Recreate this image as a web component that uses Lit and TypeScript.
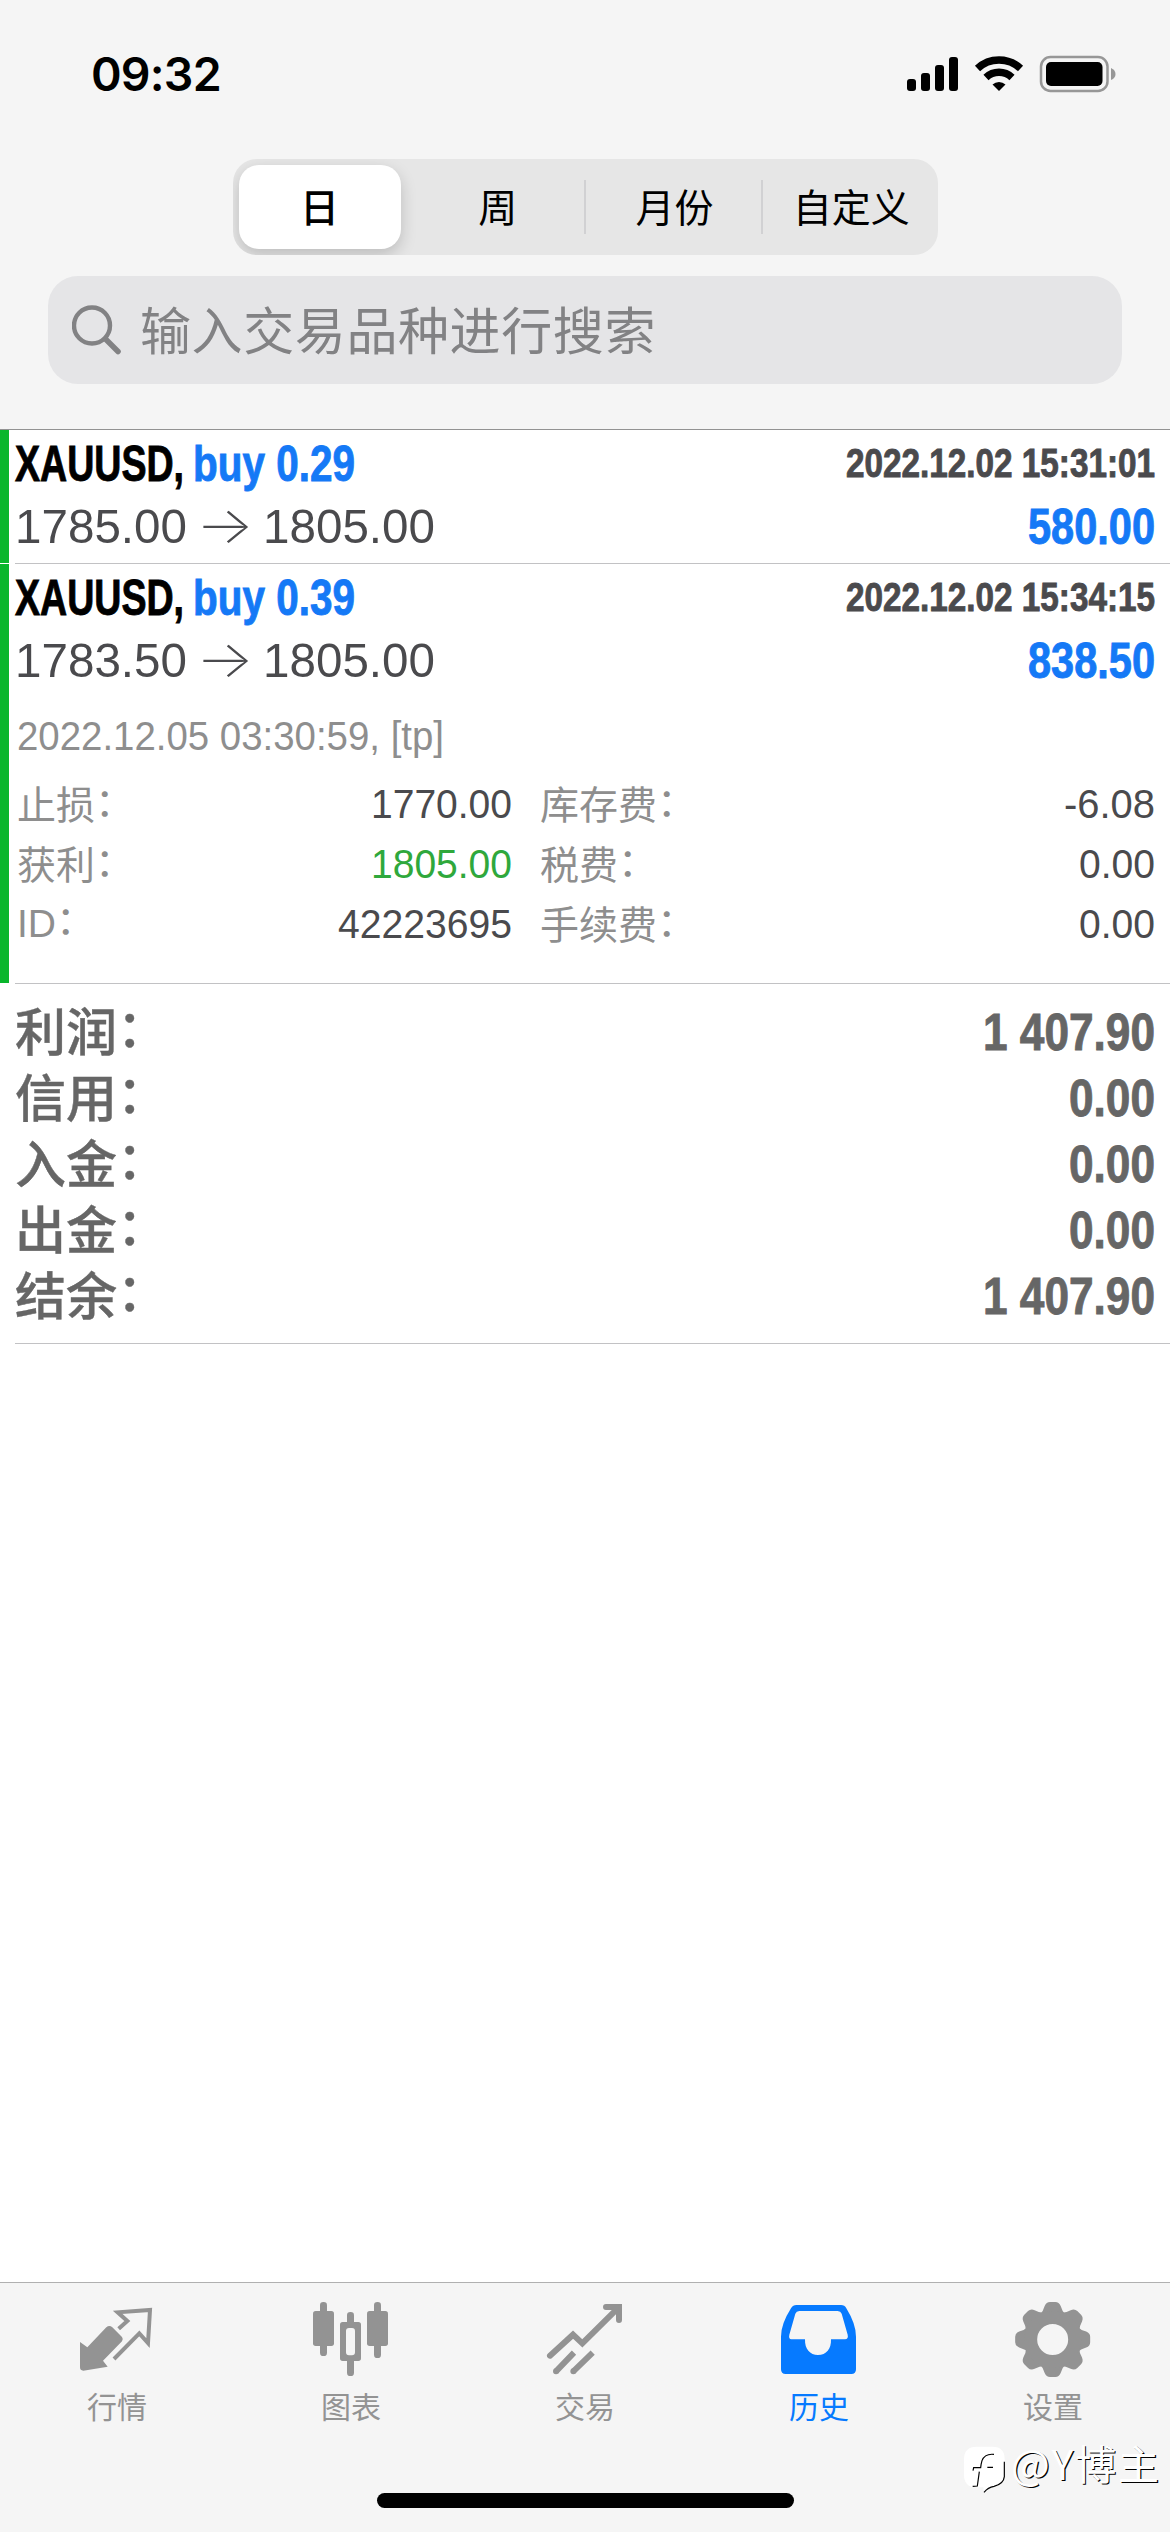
import { LitElement, html, css, svg, nothing } from "lit";
import { customElement, property, state } from "lit/decorators.js";
import { styleMap } from "lit/directives/style-map.js";

/** Single-line Latin text condensed or widened to a fixed advance width. */
@customElement("fit-text")
class FitText extends LitElement {
  @property() text = "";
  @property({ type: Number }) width = 100;
  @property({ type: Number }) size = 49;
  @property({ type: Boolean }) bold = false;
  @state() private ratio = 1;

  static styles = css`
    :host { display: block; }
    .box { overflow: visible; }
    .run {
      display: inline-block;
      font-family: "Liberation Sans", Arial, sans-serif;
      white-space: pre;
      vertical-align: top;
      transform-origin: 0 0;
    }
    .bold { font-weight: 700; -webkit-text-stroke: 0.9px currentColor; }
  `;

  updated() {
    const run = this.renderRoot.querySelector<HTMLElement>(".run")!;
    const natural = run.getBoundingClientRect().width / this.ratio;
    const next = this.width / natural;
    if (Math.abs(next - this.ratio) > 0.001) this.ratio = next;
  }

  render() {
    return html`<div class="box" style=${styleMap({ width: `${this.width}px`, height: `${this.size}px` })}>
      <span class="run ${this.bold ? "bold" : ""}" style=${styleMap({
        fontSize: `${this.size}px`,
        lineHeight: `${this.size}px`,
        transform: `scaleX(${this.ratio})`,
      })}>${this.text}</span>
    </div>`;
  }
}

interface Deal {
  lot: string;
  open: string;
  time: string;
  profit: string;
  detail?: boolean;
}

const DEALS: Deal[] = [
  { lot: "buy 0.29", open: "1785.00", time: "2022.12.02 15:31:01", profit: "580.00" },
  { lot: "buy 0.39", open: "1783.50", time: "2022.12.02 15:34:15", profit: "838.50", detail: true },
];

const SUMMARY: [string, string, number][] = [
  ["利润", "1 407.90", 172],
  ["信用", "0.00", 86],
  ["入金", "0.00", 86],
  ["出金", "0.00", 86],
  ["结余", "1 407.90", 172],
];

const TEETH = [0, 45, 90, 135, 180, 225, 270, 315];

const ICONS = {
  quotes: svg`<svg class="icon" viewBox="231 90 240 240">
    <path d="M240 216 L262 232 L319 172 Q328 164 337 172 L366 201 Q371 208 366 214 L309 272 L323 290 L250 302 Q240 302 240 292Z" fill="currentColor"/>
    <path d="M356 176 L382 153 L353 127 L450 120 L444 219 L418 190 L342 267" fill="none" stroke="currentColor" stroke-width="12"/>
  </svg>`,
  charts: svg`<svg class="icon" viewBox="933 90 240 240" fill="currentColor">
    <rect x="960" y="96" width="21" height="162" rx="10"/><rect x="939" y="123" width="63" height="105" rx="8"/>
    <rect x="1122" y="96" width="21" height="168" rx="10"/><rect x="1101" y="123" width="63" height="105" rx="8"/>
    <rect x="1041" y="126" width="21" height="40" rx="10"/><rect x="1041" y="262" width="21" height="56" rx="10"/>
    <path fill-rule="evenodd" d="M1028 156h47q8 0 8 8v101q0 8-8 8h-47q-8 0-8-8V164q0-8 8-8ZM1047 174q-9 0-9 9v64q0 9 9 9h9q9 0 9-9v-64q0-9-9-9Z"/>
  </svg>`,
  trade: svg`<svg class="icon" viewBox="435 90 240 240" fill="none" stroke="currentColor" stroke-width="18" stroke-linecap="round">
    <path d="M450 257 L519 194 L547 220 L656 112"/>
    <path d="M468 304 L522 248 M520 304 L578 248" stroke-linecap="butt"/>
    <path d="M468 304 h.1 M520 304 h.1"/>
    <path d="M618 111 H657 V150"/>
    <path d="M627 108 H660 V141Z" fill="currentColor" stroke="none"/>
    <path d="M650 102h13q3 0 3 3v10z" fill="currentColor" stroke="none"/>
  </svg>`,
  history: svg`<svg class="icon" viewBox="87 90 240 240">
    <path fill="currentColor" fill-rule="evenodd" d="M139 105 H273 Q284 105 289 115 Q318 162 318 200 V298 Q318 312 304 312 H107 Q93 312 93 298 V200 Q93 162 123 115 Q129 105 139 105Z M148 123 Q139 123 136 131 L118 194 Q115 207 124 208 H165 C164 238 180 255 204 255 C229 255 244 238 243 208 H285 Q296 207 293 194 L275 131 Q272 123 263 123Z"/>
  </svg>`,
  settings: svg`<svg class="icon" viewBox="789 90 240 240">
    <g fill="currentColor">
      ${TEETH.map((a) => svg`<path transform="rotate(${a} 908 208.500)" d="M868 136 Q880 124 884 108 Q889 96 900 96 H916 Q927 96 932 108 Q936 124 948 136Z"/>`)}
    </g>
    <circle cx="908" cy="208.500" r="66" fill="none" stroke="currentColor" stroke-width="39"/>
  </svg>`,
};

const TABS: [string, keyof typeof ICONS][] = [
  ["行情", "quotes"],
  ["图表", "charts"],
  ["交易", "trade"],
  ["历史", "history"],
  ["设置", "settings"],
];

@customElement("app-root")
class AppRoot extends LitElement {
  static styles = css`
    :host {
      display: flex;
      flex-direction: column;
      width: 1170px;
      height: 2532px;
      position: relative;
      background: #fff;
      overflow: hidden;
      font-family: "Liberation Sans", "Noto Sans CJK SC", sans-serif;
      white-space: nowrap;
    }
    * { box-sizing: border-box; }
    .header {
      flex: none;
      height: 430px;
      background: #f5f5f5;
      border-bottom: 1px solid #929292;
      display: flex;
      flex-direction: column;
      align-items: center;
    }
    .status {
      width: 100%;
      height: 159px;
      padding: 55px 54px 0 91px;
      display: flex;
      justify-content: space-between;
      align-items: flex-start;
    }
    .clock {
      font: 600 46.5px/38px Inter, sans-serif;
      letter-spacing: -0.8px;
      color: #000;
    }
    .segments {
      width: 705px;
      height: 96px;
      border-radius: 24px;
      background: #e6e6e6;
      display: flex;
      padding: 6px 0 6px 6px;
      align-items: center;
      font-family: "Noto Sans CJK SC", sans-serif;
      font-size: 39px;
      line-height: 80px;
      color: #000;
      overflow: hidden;
    }
    .segment { flex: 1; height: 84px; text-align: center; padding-left: 2px; }
    .segment.active {
      flex: none;
      width: 162px;
      padding-left: 0;
      margin-right: 9px;
      border-radius: 20px;
      background: #fff;
      font-weight: 500;
      box-shadow: 0 6px 16px rgba(0, 0, 0, 0.18);
    }
    .divider { flex: none; width: 2px; height: 54px; background: #d1d1d3; }
    .search {
      margin-top: 21px;
      width: 1074px;
      height: 108px;
      border-radius: 30px;
      background: #e5e5e7;
      display: flex;
      align-items: center;
      padding-left: 24px;
      gap: 18px;
      color: #828284;
      font-family: "Noto Sans CJK SC", sans-serif;
      font-size: 51px;
      letter-spacing: 0.6px;
      line-height: 76px;
    }
    .search span { padding-bottom: 5px; }
    .deal { display: flex; }
    .stripe { flex: none; width: 9px; height: 133px; background: #09b62c; }
    .detail .stripe { height: 419px; }
    .deal-body {
      flex: 1;
      margin-left: 6px;
      height: 134px;
      padding: 9px 15px 0 0;
      border-bottom: 1px solid #c2c2c4;
    }
    .detail .deal-body { height: 420px; }
    .row { display: flex; justify-content: space-between; height: 63px; }
    .left { display: flex; }
    .symbol { color: #000; }
    .blue { color: #1579f6; }
    .dark { color: #4a4a4d; }
    .lot { margin-left: 9px; }
    .time { padding-top: 4px; }
    .arrow {
      width: 76px;
      text-align: center;
      font: 200 51px/46px Inter, sans-serif;
      transform: scaleX(1.2);
    }
    .closed { color: #8e8e8e; margin: 17px 0 0 2px; }
    .grid {
      display: grid;
      grid-template-columns: 495px 1fr;
      column-gap: 28px;
      grid-auto-rows: 60px;
      margin: 18px 0 0 2px;
    }
    .cell { display: flex; justify-content: space-between; align-items: center; }
    .label {
      color: #8e8e8e;
      font-size: 39px;
      line-height: 56px;
      padding-bottom: 4px;
      font-family: "Noto Sans CJK SC", sans-serif;
    }
    .label.latin {
      font-family: "Liberation Sans", "Noto Sans CJK SC", sans-serif;
      padding-bottom: 0;
    }
    .colon { vertical-align: 0.07em; line-height: 0; }
    .green { color: #2fa83c; }
    .summary {
      margin-left: 15px;
      height: 360px;
      padding: 15px 15px 0 0;
      border-bottom: 1px solid #c2c2c4;
      color: #666;
    }
    .total {
      display: flex;
      justify-content: space-between;
      align-items: center;
      height: 66px;
      font: 500 51px/60px "Noto Sans CJK SC", sans-serif;
    }
    .total-label { padding-bottom: 6px; -webkit-text-stroke: 0.4px currentColor; }
    .spacer { flex: 1; }
    .tabs {
      flex: none;
      height: 250px;
      background: #f5f5f5;
      border-top: 1px solid #b0b0b0;
      display: flex;
      flex-direction: column;
      align-items: center;
    }
    .tab-row { display: flex; width: 100%; height: 210px; padding-top: 17px; }
    .tab {
      flex: 1;
      display: flex;
      flex-direction: column;
      align-items: center;
      gap: 3px;
      color: #939393;
      font: 400 30px/44px "Noto Sans CJK SC", sans-serif;
    }
    .tab.active { color: #067aff; }
    .icon { display: block; width: 80px; height: 80px; }
    .home { width: 417px; height: 15px; border-radius: 8px; background: #000; }
    .mark {
      position: absolute;
      left: 964px;
      top: 2443px;
      height: 52px;
      display: flex;
      align-items: center;
      gap: 5px;
      color: #fff;
      font: 400 41px/38px "Noto Sans CJK SC", sans-serif;
      letter-spacing: 1.8px;
      text-shadow: 1.2px 1.2px 0 #000;
    }
    .mark svg { display: block; }
    .mark span { padding-bottom: 14px; }
  `;

  private status() {
    return html`<div class="status">
      <span class="clock">09:32</span>
      <svg width="209" height="38" viewBox="907 55 209 38">
        <rect x="907" y="79" width="9" height="12" rx="3"/>
        <rect x="921" y="73" width="9" height="18" rx="3"/>
        <rect x="935" y="65" width="9" height="26" rx="3"/>
        <rect x="949" y="57" width="9" height="34" rx="3"/>
        <g fill="none" stroke="#000" stroke-width="7.500">
          <path d="M977.500 68.500 A31.500 31.500 0 0 1 1020.500 68.500"/>
          <path d="M986 77.500 A19 19 0 0 1 1012 77.500"/>
        </g>
        <path d="M999 91 L992.500 84.500 A9.500 9.500 0 0 1 1005.500 84.500Z"/>
        <rect x="1041" y="57" width="66.500" height="34" rx="9.500" fill="none" stroke="#979797" stroke-width="2.500"/>
        <rect x="1046" y="62" width="56.500" height="24" rx="5"/>
        <path d="M1111 68 Q1115.500 70 1115.500 74 Q1115.500 78 1111 80Z" fill="#979797"/>
      </svg>
    </div>`;
  }

  private field(label: string, value: string, width: number, tone = "dark", latin = false) {
    return html`<div class="cell">
      <span class="label ${latin ? "latin" : ""}">${label}<span class="colon">：</span></span>
      <fit-text class=${tone} text=${value} width=${width} size="40"></fit-text>
    </div>`;
  }

  private deal(d: Deal) {
    return html`<div class="deal ${d.detail ? "detail" : ""}">
      <div class="stripe"></div>
      <div class="deal-body">
        <div class="row">
          <div class="left">
            <fit-text class="symbol" bold text="XAUUSD," width="169" size="49.500"></fit-text>
            <fit-text class="blue lot" bold text=${d.lot} width="162" size="49.500"></fit-text>
          </div>
          <fit-text class="dark time" bold text=${d.time} width="309" size="40"></fit-text>
        </div>
        <div class="row">
          <div class="left dark">
            <fit-text text=${d.open} width="172" size="49"></fit-text>
            <span class="arrow">→</span>
            <fit-text text="1805.00" width="172" size="49"></fit-text>
          </div>
          <fit-text class="blue" bold text=${d.profit} width="127" size="49.500"></fit-text>
        </div>
        ${d.detail
          ? html`<fit-text class="closed" text="2022.12.05 03:30:59, [tp]" width="427" size="40"></fit-text>
              <div class="grid">
                ${this.field("止损", "1770.00", 141)}
                ${this.field("库存费", "-6.08", 91)}
                ${this.field("获利", "1805.00", 141, "green")}
                ${this.field("税费", "0.00", 76)}
                ${this.field("ID", "42223695", 174, "dark", true)}
                ${this.field("手续费", "0.00", 76)}
              </div>`
          : nothing}
      </div>
    </div>`;
  }

  render() {
    return html`
      <div class="header">
        ${this.status()}
        <div class="segments">
          <div class="segment active">日</div>
          <div class="segment">周</div>
          <div class="divider"></div>
          <div class="segment">月份</div>
          <div class="divider"></div>
          <div class="segment">自定义</div>
        </div>
        <div class="search">
          <svg width="50" height="50" viewBox="0 0 50 50" fill="none" stroke="currentColor">
            <circle cx="20" cy="20.500" r="18" stroke-width="4.400"/>
            <path d="M33.500 34 L46 46.500" stroke-width="5.500" stroke-linecap="round"/>
          </svg>
          <span>输入交易品种进行搜索</span>
        </div>
      </div>
      ${DEALS.map((d) => this.deal(d))}
      <div class="summary">
        ${SUMMARY.map(([k, v, w]) => html`<div class="total">
          <span class="total-label">${k}<span class="colon">：</span></span>
          <fit-text bold text=${v} width=${w} size="51"></fit-text>
        </div>`)}
      </div>
      <div class="spacer"></div>
      <div class="tabs">
        <div class="tab-row">
          ${TABS.map(([name, icon]) => html`<div class="tab ${icon === "history" ? "active" : ""}">
            ${ICONS[icon]}<span>${name}</span>
          </div>`)}
        </div>
        <div class="home"></div>
      </div>
      <div class="mark">
        <svg width="42" height="47" viewBox="28 48 126 141">
          <path d="M66 50 H114 Q150 50 150 88 V132 Q150 170 110 171 L88 188 L86 172 H66 Q28 172 28 134 V88 Q28 50 66 50Z" fill="#fff"/>
          <path d="M118 73 Q90 70 82 92 Q79 102 78 113 H57 L55 122 M98 112 H115 M74 125 L68 168 L54 169 M149 95 V140 Q147 162 118 169 Q100 172 88 187" fill="none" stroke="#000" stroke-width="3.500"/>
        </svg>
        <span>@Y博主</span>
      </div>
    `;
  }
}
